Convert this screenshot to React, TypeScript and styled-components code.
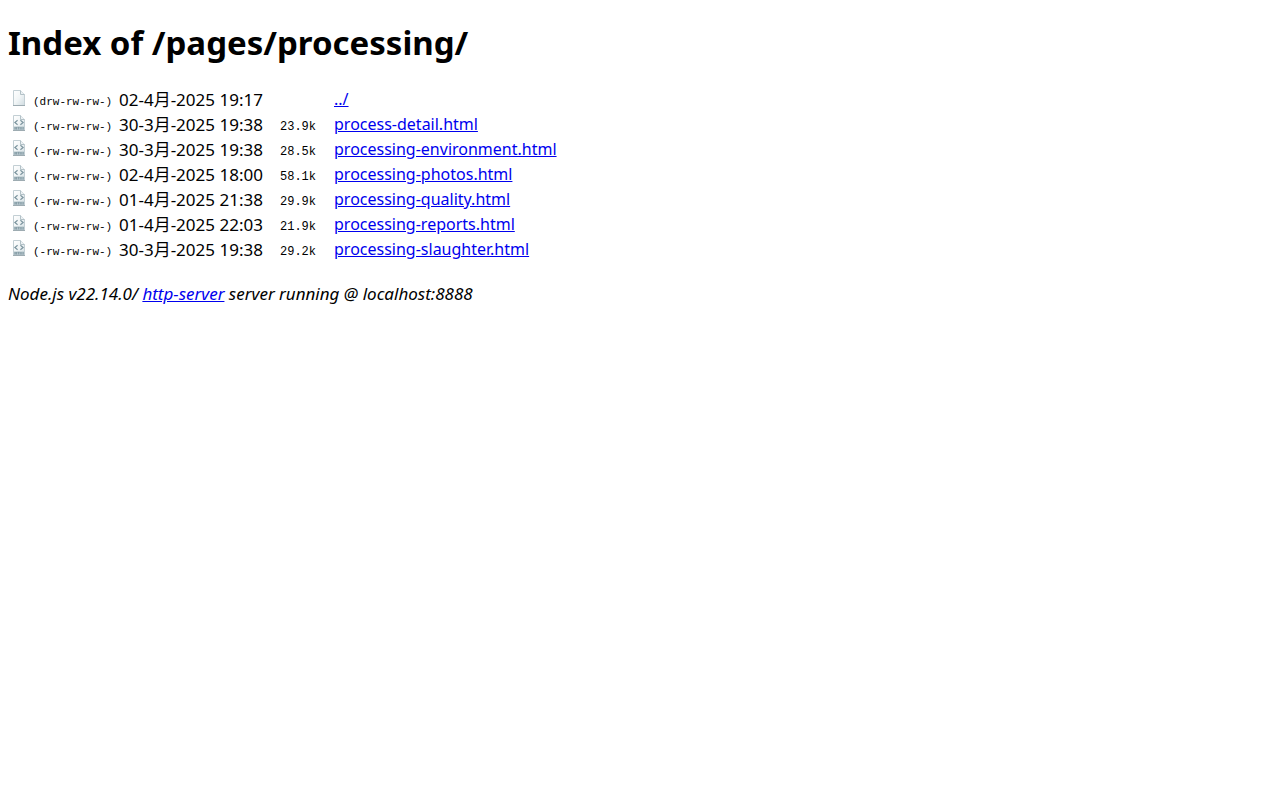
import React from 'react';
import styled, { createGlobalStyle } from 'styled-components';

const GlobalStyle = createGlobalStyle`
  body {
    margin: 8px;
    background: #fff;
    color: #000;
    font-family: "Noto Sans", "Noto Sans CJK SC", sans-serif;
    font-size: 16px;
    line-height: 21px;
  }
`;

const Title = styled.h1`
  margin: 12px 0 20px;
  font-size: 33px;
  line-height: 46px;
  font-weight: 700;
`;

const Listing = styled.table`
  border-spacing: 2px;
  table-layout: fixed;
  width: 560px;
  line-height: 21px;
`;

const Cell = styled.td`
  padding: 1px;
  height: 21px;
  white-space: nowrap;
  vertical-align: middle;
`;

const DateCell = styled(Cell)`
  font-size: 17px;
`;

const SpacedCell = styled(Cell)`
  padding-left: 16px;
`;

const Col = styled.col<{ $width?: number }>`
  width: ${({ $width }) => ($width ? `${$width}px` : 'auto')};
`;

const Code = styled.code<{ $small?: boolean }>`
  font-family: "Liberation Mono", monospace;
  font-size: ${({ $small }) => ($small ? 11 : 12)}px;
  line-height: 12px;
`;

const Link = styled.a`
  color: #0000ee;
  text-decoration: underline;
`;

const Footer = styled.address`
  margin-top: 20px;
  font-size: 17px;
  font-style: italic;
`;

const Icon = styled.svg`
  display: block;
  width: 16px;
  height: 16px;
  margin-bottom: 3px;
`;

const FileIcon = ({ html }: { html: boolean }) => (
  <Icon viewBox="0 0 16 16" aria-hidden="true">
    <defs>
      <linearGradient id="paper" x1="0" y1="0" x2="1" y2="1">
        <stop offset="0" stopColor="#ffffff" />
        <stop offset="0.5" stopColor="#f1f5f6" />
        <stop offset="1" stopColor="#cfdbe0" />
      </linearGradient>
    </defs>
    <path d="M2.5 .5h7l4 4v11h-11z" fill="url(#paper)" stroke="#c3cfd4" />
    <path d="M2 15.5h12" stroke="#9dabb1" />
    <path d="M9.5 .5v4h4" fill="#edf2f4" stroke="#b3c1c7" />
    {html && (
      <>
        <path d="M6.6 5.3 3.9 7.5l2.7 2.2M9.4 5.3 12.1 7.5 9.4 9.7" fill="none" stroke="#7d959f" strokeWidth="1.2" />
        <path d="M3 11.5h10V15H3z" fill="#b4c4cb" />
        <path d="M4 12v2.5M5.500 12v2.500M4 13h1.500M6.500 12.400h2M7.500 12.400v2M9.300 12v2.500M10.800 12v2.500M12.300 12v2.500" stroke="#7d959f" strokeWidth=".7" />
      </>
    )}
  </Icon>
);

type Entry = { perms: string; date: string; size: string; name: string };

const entries: Entry[] = [
  { perms: '(drw-rw-rw-)', date: '02-4月-2025 19:17', size: '', name: '../' },
  { perms: '(-rw-rw-rw-)', date: '30-3月-2025 19:38', size: '23.9k', name: 'process-detail.html' },
  { perms: '(-rw-rw-rw-)', date: '30-3月-2025 19:38', size: '28.5k', name: 'processing-environment.html' },
  { perms: '(-rw-rw-rw-)', date: '02-4月-2025 18:00', size: '58.1k', name: 'processing-photos.html' },
  { perms: '(-rw-rw-rw-)', date: '01-4月-2025 21:38', size: '29.9k', name: 'processing-quality.html' },
  { perms: '(-rw-rw-rw-)', date: '01-4月-2025 22:03', size: '21.9k', name: 'processing-reports.html' },
  { perms: '(-rw-rw-rw-)', date: '30-3月-2025 19:38', size: '29.2k', name: 'processing-slaughter.html' },
];

export default function App() {
  return (
    <>
      <GlobalStyle />
      <Title>Index of /pages/processing/</Title>
      <Listing>
        <colgroup>
          <Col $width={20} />
          <Col $width={84} />
          <Col $width={144} />
          <Col $width={52} />
          <Col />
        </colgroup>
        <tbody>
          {entries.map((entry) => (
            <tr key={entry.name}>
              <Cell><FileIcon html={entry.name.endsWith('.html')} /></Cell>
              <Cell><Code $small>{entry.perms}</Code></Cell>
              <DateCell>{entry.date}</DateCell>
              <SpacedCell><Code>{entry.size}</Code></SpacedCell>
              <SpacedCell><Link href={entry.name}>{entry.name}</Link></SpacedCell>
            </tr>
          ))}
        </tbody>
      </Listing>
      <Footer>
        Node.js v22.14.0/ <Link href="#http-server">http-server</Link> server running @ localhost:8888
      </Footer>
    </>
  );
}
